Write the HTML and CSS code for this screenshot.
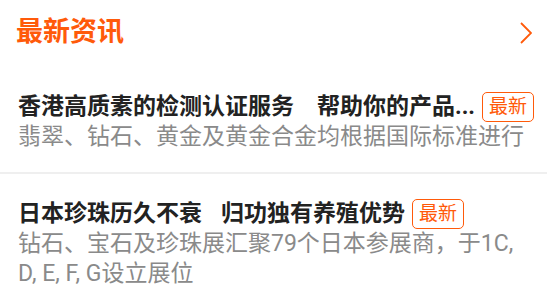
FILE: index.html
```html
<!DOCTYPE html>
<html lang="zh-CN">
<head>
<meta charset="utf-8">
<link rel="stylesheet" href="styles.css">
</head>
<body>
<div class="page">
  <div class="header">
    <div class="header-title">最新资讯</div>
    <svg class="chevron" width="12" height="22" viewBox="0 0 12 22"><polyline points="1,1 11,11 1,21" fill="none" stroke="#ff5a0a" stroke-width="1.8"/></svg>
  </div>
  <div class="item">
    <div class="row">
      <div class="title">香港高质素的检测认证服务　帮助你的产品...</div>
      <div class="badge">最新</div>
    </div>
    <div class="desc">翡翠、钻石、黄金及黄金合金均根据国际标准进行</div>
  </div>
  <div class="sep"></div>
  <div class="item">
    <div class="row">
      <div class="title">日本珍珠历久不衰<span class="gap"></span>归功独有养殖优势</div>
      <div class="badge">最新</div>
    </div>
    <div class="desc">钻石、宝石及珍珠展汇聚79个日本参展商，于1C, D, E, F, G设立展位</div>
  </div>
</div>
</body>
</html>
```
FILE: styles.css
```css
html, body {
  margin: 0;
  padding: 0;
  background: #fff;
}
.page {
  width: 547px;
  font-family: Roboto, "Noto Sans CJK SC", sans-serif;
}
.header {
  display: flex;
  align-items: center;
  justify-content: space-between;
  height: 64px;
  padding: 0 15px 0 16px;
}
.header-title {
  font-size: 27px;
  font-weight: 700;
  color: #ff5a0a;
  line-height: 1;
}
.chevron {
  display: block;
  margin-top: 2px;
}
.item {
  padding: 27px 18px 20px 18px;
}
.item + .sep + .item {
  padding-top: 24px;
}
.row {
  display: flex;
  align-items: center;
  height: 31px;
}
.title {
  flex: 0 0 auto;
  white-space: nowrap;
  font-size: 23px;
  font-weight: 700;
  color: #222;
  line-height: 31px;
}
.gap {
  display: inline-block;
  width: 19px;
}
.badge {
  flex: 0 0 auto;
  margin-left: 7px;
  box-sizing: border-box;
  height: 30px;
  padding: 0 6px;
  border: 1.5px solid #ff5a0a;
  border-radius: 5px;
  color: #ff5a0a;
  font-size: 19px;
  line-height: 27px;
}
.desc {
  font-size: 23px;
  color: #8a8a8a;
  line-height: 30px;
}
.sep {
  height: 2px;
  background: #efefef;
}
```
